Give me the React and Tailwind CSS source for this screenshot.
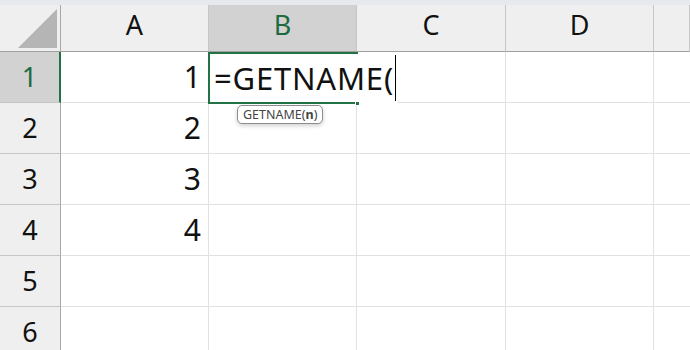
import React from "react";

const cols = ["A", "B", "C", "D", ""];
const rows = [1, 2, 3, 4, 5, 6];
const values = { 1: "1", 2: "2", 3: "3", 4: "4" };

export default function App() {
  return (
    <div className="relative w-[690px] h-[350px] overflow-hidden bg-white font-['Noto_Sans',sans-serif] text-[#111]">
      <div className="h-[5px] bg-[#e6eaee]" />
      <div className="grid grid-cols-[61px_148px_148px_149px_148px_1fr] grid-rows-[47px_repeat(6,51px)]">
        {/* corner */}
        <div className="relative bg-[#efefef] border-r border-b border-r-[#a8a8a8] border-b-[#a0a0a0]">
          <svg className="absolute left-0 top-0" width="60" height="46">
            <polygon points="18,43 57,4 57,43" fill="#b5b5b5" />
          </svg>
        </div>
        {cols.map((c, i) => (
          <div
            key={c + i}
            className={
              (c === "B" ? "bg-[#d2d2d2] text-[#1d6b3f] " : "bg-[#efefef] ") +
              "flex justify-center pt-[5px] text-[27px] leading-[30px] border-b border-r border-b-[#a0a0a0] border-r-[#c6c6c6]"
            }
          >
            {c}
          </div>
        ))}
        {rows.map((r) => (
          <React.Fragment key={r}>
            <div
              className={
                (r === 1
                  ? "bg-[#d2d2d2] text-[#1d6b3f] border-r-2 border-r-[#217346] "
                  : "bg-[#efefef] border-r border-r-[#a8a8a8] ") +
                "flex items-center justify-center text-[27px] border-b border-b-[#c6c6c6]"
              }
            >
              {r}
            </div>
            <div className="flex items-end justify-end pr-[7px] pb-[8px] text-[30px] leading-[34px] border-r border-b border-[#e1e1e1]">
              {values[r] || ""}
            </div>
            <div className="border-r border-b border-[#e1e1e1]" />
            <div className="border-r border-b border-[#e1e1e1]" />
            <div className="border-r border-b border-[#e1e1e1]" />
            <div className="border-b border-[#e1e1e1]" />
          </React.Fragment>
        ))}
      </div>

      {/* active cell editor */}
      <div className="absolute left-[208px] top-[52px] w-[190px] h-[52px] bg-white" />
      <div className="absolute left-[208px] top-[52px] w-[150px] h-[52px] border-2 border-r-0 border-[#217346]" />
      <div className="absolute left-[355px] top-[101px] w-[5px] h-[5px] bg-[#217346] border border-white" />
      <div className="absolute left-[214px] top-[55px] flex items-center h-[46px] text-[31px] tracking-[0.8px] leading-[34px]">
        <span>=GETNAME(</span>
        <span className="ml-[1px] w-[1px] h-[46px] bg-black" />
      </div>

      {/* tooltip */}
      <div className="absolute left-[237px] top-[105px] h-[19px] px-[5px] flex items-center rounded-[5px] border border-[#8c8c8c] bg-white shadow-[0_2px_4px_rgba(0,0,0,0.18)] text-[12.5px] leading-[14px] text-[#444]">
        GETNAME(<span className="font-bold">n</span>)
      </div>
    </div>
  );
}
